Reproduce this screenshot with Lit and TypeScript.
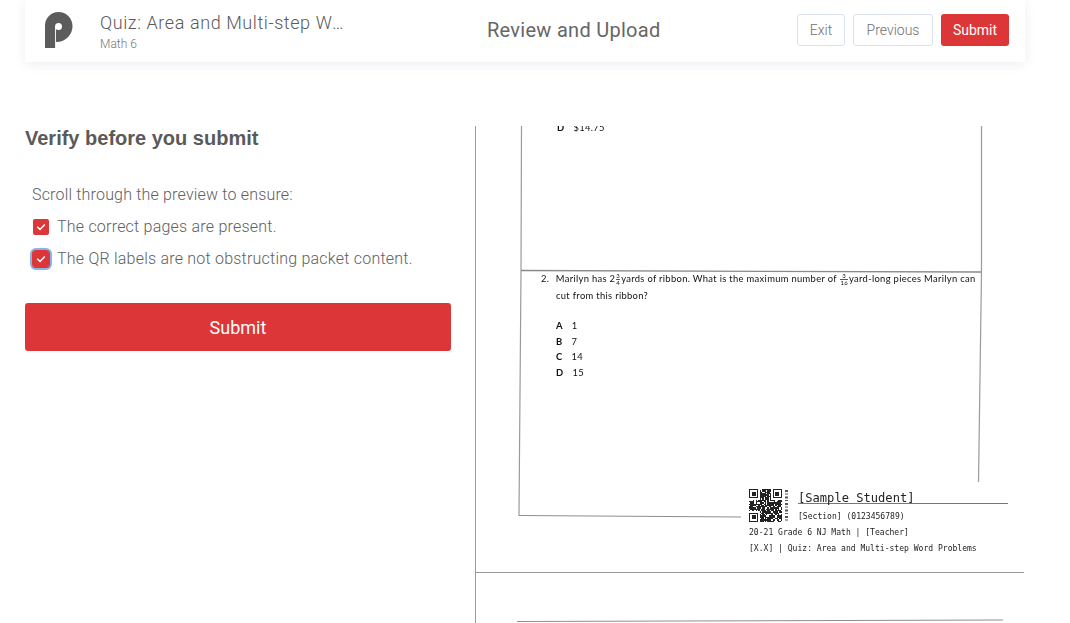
import { LitElement, html, css, svg } from "lit";
import { customElement } from "lit/decorators.js";

const SIZE = 25;
function qrCells() {
  const cells: [number, number][] = [];
  let seed = 137;
  const finder = (x: number, y: number) => x >= 0 && y >= 0 && x < 7 && y < 7;
  for (let y = 0; y < SIZE; y++) {
    for (let x = 0; x < SIZE; x++) {
      const inTL = finder(x, y);
      const inTR = finder(x - (SIZE - 7), y);
      const inBL = finder(x, y - (SIZE - 7));
      let on: boolean;
      if (inTL || inTR || inBL) {
        const fx = inTR ? x - (SIZE - 7) : x;
        const fy = inBL ? y - (SIZE - 7) : y;
        on = fx === 0 || fx === 6 || fy === 0 || fy === 6 || (fx >= 2 && fx <= 4 && fy >= 2 && fy <= 4);
      } else if ((x === 7 && y < 8) || (y === 7 && x < 8) || (x === SIZE - 8 && y < 8) || (y === 7 && x >= SIZE - 8) || (x === 7 && y >= SIZE - 8) || (y === SIZE - 8 && x < 8)) {
        on = false;
      } else {
        seed = (seed * 1103515245 + 12345) & 0x7fffffff;
        on = ((seed >> 16) & 3) > 0;
      }
      if (on) cells.push([x, y]);
    }
  }
  return cells;
}

@customElement("app-root")
export class AppRoot extends LitElement {
  static styles = css`
    :host {
      display: block;
      height: 623px;
      overflow: hidden;
      background: #fff;
      font-family: "Roboto", "Liberation Sans", Arial, sans-serif;
      font-weight: 300;
      color: #5a5a5a;
      box-sizing: border-box;
      padding: 0 45px 0 25px;
    }
    header {
      height: 62px;
      display: flex;
      align-items: center;
      padding: 0 16px 2px 20px;
      box-sizing: border-box;
      box-shadow: 0 2px 10px rgba(120, 135, 170, 0.14);
      background: #fff;
    }
    .brand { display: flex; align-items: center; gap: 27px; flex: 0 0 442px; min-width: 0; }
    .logo { width: 28px; height: 36px; flex: none; display: block; }
    .titles { min-width: 0; margin-top: 3px; }
    .title {
      font-size: 18px;
      line-height: 22px;
      letter-spacing: 0.58px;
      width: 244px;
      white-space: nowrap;
      overflow: hidden;
      text-overflow: ellipsis;
    }
    .sub { font-size: 12px; line-height: 15px; margin-top: 3px; color: #777; }
    .center { font-size: 20px; font-weight: 400; color: #666; letter-spacing: 0.28px; }
    .actions { display: flex; gap: 8px; margin-left: auto; }
    button {
      font: inherit;
      height: 32px;
      border-radius: 3px;
      box-sizing: border-box;
      font-size: 14px;
      padding: 0;
      cursor: pointer;
    }
    .ghost { background: #fff; border: 1px solid #dde3ec; color: #707070; }
    .exit { width: 48px; }
    .prev { width: 80px; }
    .primary { background: #dd3639; border: 0; color: #fff; font-weight: 400; }
    .small { width: 68px; }
    main {
      display: grid;
      grid-template-columns: 426px 549px;
      column-gap: 24px;
      padding-top: 64px;
    }
    h1 {
      margin: 0;
      font-size: 20px;
      line-height: 24px;
      font-weight: 700;
      color: #5a5a5a;
      font-family: "Liberation Sans", Arial, sans-serif;
    }
    .intro { margin: 0 0 0 7px; padding-top: 34px; font-size: 16px; line-height: 22px; color: #606060; letter-spacing: 0.18px; }
    .checks { margin: 10px 0 0 8px; display: flex; flex-direction: column; gap: 10px; }
    .check { display: flex; align-items: center; gap: 8px; font-size: 16px; line-height: 22px; color: #606060; letter-spacing: 0.22px; }
    .box {
      width: 16px;
      height: 16px;
      border-radius: 2px;
      background: #dd3639;
      flex: none;
      display: grid;
      place-items: center;
    }
    .box svg { width: 10px; height: 8px; display: block; }
    .focus { box-shadow: 0 0 0 1px #dd3639, 0 0 0 3px #8ab4e8; border-radius: 3px; }
    .big {
      display: block;
      width: 426px;
      height: 48px;
      margin-top: 33px;
      font-size: 18px;
      border-radius: 3px;
    }
    .preview {
      position: relative;
      height: 497px;
      overflow: hidden;
      background: #fff;
      color: #333;
    }
    .preview svg.scan { position: absolute; left: 0; top: 0; width: 549px; height: 497px; }
    .t { position: absolute; white-space: nowrap; filter: blur(0.4px); }
    .hand { font-family: "Lato", "DejaVu Sans", sans-serif; font-weight: 400; font-size: 9.4px; line-height: 12px; color: #111; letter-spacing: 0.32px; }
    .hand b { font-weight: 700; }
    .gap { display: inline-block; width: 9px; }
    .gap-num { display: inline-block; width: 6.5px; }
    .frac { display: inline-flex; flex-direction: column; align-items: center; vertical-align: middle; font-size: 6px; line-height: 6px; margin: 0 1px; }
    .frac i { font-style: normal; border-top: 1px solid #555; }
    .mono { font-family: "DejaVu Sans Mono", "Liberation Mono", monospace; font-weight: 400; color: #222; }
    .m1 { font-size: 8.05px; line-height: 10px; }
    .name { font-size: 12.1px; line-height: 15px; }
    .qr { position: absolute; left: 274px; top: 363px; width: 33px; height: 33px; filter: blur(0.3px); }
    .qrside { position: absolute; left: 309px; top: 364px; width: 5px; height: 31px; filter: blur(0.4px); }
  `;

  private check() {
    return html`<span class="box"><svg viewBox="0 0 10 8" fill="none"><path d="M1.2 3.8 4 6.4 8.8 1.4" stroke="#fff" stroke-width="1.5"/></svg></span>`;
  }

  render() {
    const cells = qrCells();
    return html`
      <header>
        <div class="brand">
          <svg class="logo" viewBox="0 0 28 36">
            <path fill="#5c5c5c" d="M0 36V13.500C0 6 6 0 13.500 0S27.500 6 27.500 14 21.500 30 11 30V36H0Z"/>
            <circle cx="13.500" cy="14.500" r="3.500" fill="#fff"/>
            <path d="M10.500 14.500V36" stroke="#fff" stroke-width="0.900"/>
          </svg>
          <div class="titles">
            <div class="title">Quiz: Area and Multi-step Word Problems</div>
            <div class="sub">Math 6</div>
          </div>
        </div>
        <div class="center">Review and Upload</div>
        <div class="actions">
          <button class="ghost exit">Exit</button>
          <button class="ghost prev">Previous</button>
          <button class="primary small">Submit</button>
        </div>
      </header>
      <main>
        <section>
          <h1>Verify before you submit</h1>
          <p class="intro">Scroll through the preview to ensure:</p>
          <div class="checks">
            <div class="check">${this.check()}<span>The correct pages are present.</span></div>
            <div class="check"><span class="focus">${this.check()}</span><span>The QR labels are not obstructing packet content.</span></div>
          </div>
          <button class="primary big">Submit</button>
        </section>
        <section class="preview">
          <svg class="scan" viewBox="0 0 549 497" fill="none" stroke="#8c8c8c">
            <path d="M0.500 0V497" stroke="#999"/>
            <path d="M46.500 0 46 146 44 389" stroke="#9a9a9a" stroke-width="1.200"/>
            <path d="M506.500 0 506.500 146 503.500 356" stroke="#9a9a9a" stroke-width="1.200"/>
            <path d="M46 144.500 506 146" stroke="#8a8a8a" stroke-width="1.300"/>
            <path d="M43.500 389.500 266 391" stroke="#8f8f8f" stroke-width="1.200"/>
            <path d="M323 377.500H533" stroke="#777" stroke-width="1.200"/>
            <path d="M0 446.500H549" stroke="#999" stroke-width="1.200"/>
            <path d="M42 495.500 528 494" stroke="#8f8f8f" stroke-width="1.200"/>
          </svg>
          <div class="t hand" style="left:82px;top:-4px"><b>D</b><span class="gap"></span>$14.75</div>
          <div class="t hand" style="left:66px;top:147px">2.<span class="gap-num"></span>Marilyn has 2<span class="frac">3<i>4</i></span>yards of ribbon. What is the maximum number of <span class="frac">3<i>16</i></span>yard-long pieces Marilyn can</div>
          <div class="t hand" style="left:81px;top:164px">cut from this ribbon?</div>
          <div class="t hand" style="left:81px;top:194px"><b>A</b><span class="gap"></span>1</div>
          <div class="t hand" style="left:81px;top:210px"><b>B</b><span class="gap"></span>7</div>
          <div class="t hand" style="left:81px;top:225px"><b>C</b><span class="gap"></span>14</div>
          <div class="t hand" style="left:81px;top:241px"><b>D</b><span class="gap"></span>15</div>
          <svg class="qr" viewBox="0 0 ${SIZE} ${SIZE}" shape-rendering="crispEdges">
            ${cells.map(([x, y]) => svg`<rect x=${x} y=${y} width="1" height="1" fill="#222"/>`)}
          </svg>
          <svg class="qrside" viewBox="0 0 5 31">
            <path d="M2.500 0V31" stroke="#555" stroke-width="3" stroke-dasharray="2 1.500 1 2"/>
          </svg>
          <div class="t mono name" style="left:323px;top:365px">[Sample Student]</div>
          <div class="t mono m1" style="left:323px;top:386px">[Section] (0123456789)</div>
          <div class="t mono m1" style="left:274px;top:402px">20-21 Grade 6 NJ Math | [Teacher]</div>
          <div class="t mono m1" style="left:274px;top:418px">[X.X] | Quiz: Area and Multi-step Word Problems</div>
        </section>
      </main>
    `;
  }
}
